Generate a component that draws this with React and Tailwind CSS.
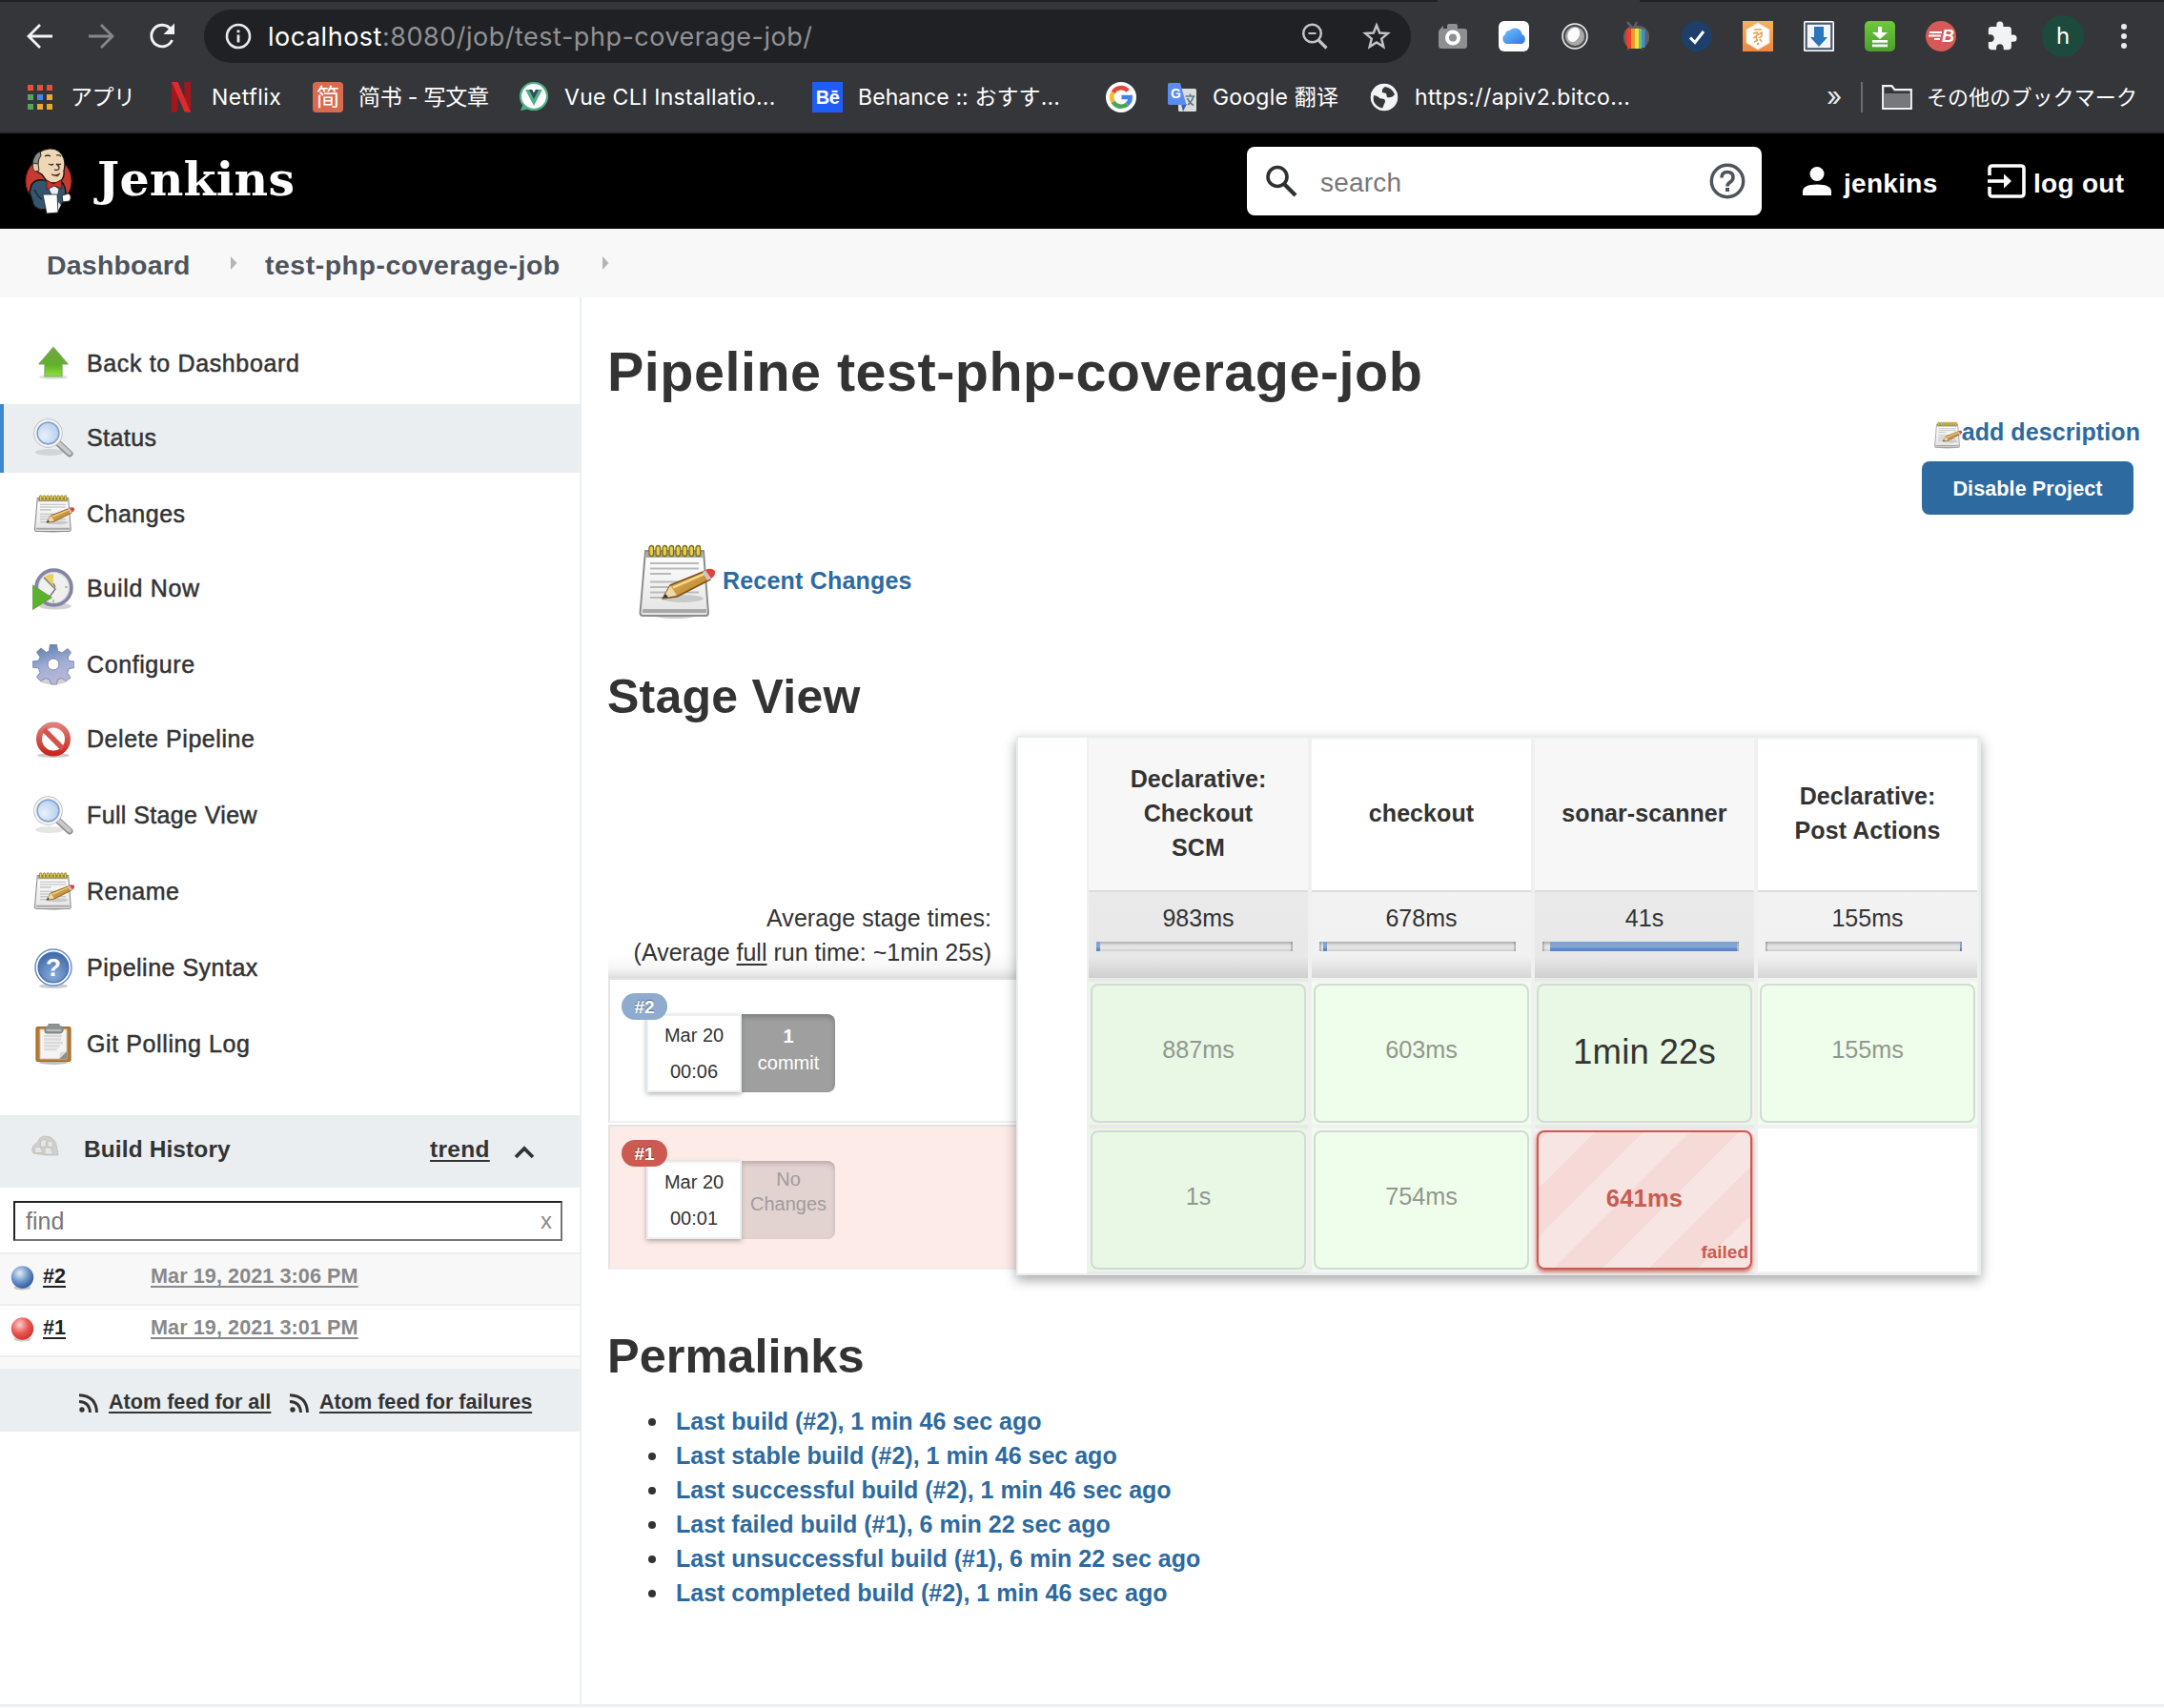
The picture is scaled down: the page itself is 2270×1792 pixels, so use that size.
import React from "react";

/* ---------- browser toolbar icons ---------- */

const Svg = ({ w, h, vb, children, className = "", par }) => (
  <svg width={w} height={h} viewBox={vb || `0 0 ${w} ${h}`} preserveAspectRatio={par} className={"block shrink-0 " + className} fill="none">
    {children}
  </svg>
);

const ArrowLeft = () => (
  <Svg w={28} h={28}>
    <path d="M27 14H3M14 2L2 14l12 12" stroke="#f1f3f4" strokeWidth="2.8" />
  </Svg>
);
const ArrowRight = () => (
  <Svg w={28} h={28}>
    <path d="M1 14h24M14 2l12 12-12 12" stroke="#87888b" strokeWidth="2.8" />
  </Svg>
);
const Reload = () => (
  <Svg w={28} h={28}>
    <path d="M23 6.5A11.3 11.3 0 1 0 24.500 18" stroke="#f1f3f4" strokeWidth="2.9" />
    <path d="M27 0.500v11.5H15.500z" fill="#f1f3f4" />
  </Svg>
);
const InfoCircle = () => (
  <Svg w={28} h={28}>
    <circle cx="14" cy="14" r="12" stroke="#e8eaed" strokeWidth="2.6" />
    <path d="M14 12.5v8M14 7.5v2.8" stroke="#e8eaed" strokeWidth="2.8" />
  </Svg>
);
const ZoomOut = () => (
  <Svg w={28} h={28}>
    <circle cx="11.5" cy="11" r="9.3" stroke="#c3c4c6" strokeWidth="2.5" />
    <path d="M18 18l8.5 8.5" stroke="#c3c4c6" strokeWidth="3.2" />
    <path d="M7.5 11h8" stroke="#c3c4c6" strokeWidth="2" />
  </Svg>
);
const Star = () => (
  <Svg w={30} h={30}>
    <path d="M15 3.5l3.2 8 8.6.6-6.6 5.5 2.1 8.5L15 21.500l-7.3 4.600 2.100-8.500-6.600-5.500 8.600-.6z" stroke="#c3c4c6" strokeWidth="2.4" />
  </Svg>
);

const Camera = () => (
  <Svg w={32} h={32}>
    <path d="M3 8l3-3v3h4V5q0-2 2-2h7q2 0 2 2v3h7q3 0 3 3v15q0 3-3 3H4q-3 0-3-3V11z" fill="#8e8f91" />
    <circle cx="16" cy="17.500" r="6" fill="#8e8f91" stroke="#fff" strokeWidth="4" />
  </Svg>
);
const ICloud = () => (
  <Svg w={32} h={32}>
    <defs>
      <linearGradient id="icl" x1="0" y1="0" x2="1" y2="1">
        <stop offset="0" stopColor="#6fc4f8" />
        <stop offset="1" stopColor="#2f74ea" />
      </linearGradient>
    </defs>
    <rect width="32" height="32" rx="6" fill="#fff" />
    <path d="M8.500 24a5.500 5.500 0 0 1-1.500-10 4.500 4.500 0 0 1 4.500-4 7.500 7.500 0 0 1 13 4 5.300 5.300 0 0 1 -.5 10z" fill="url(#icl)" />
  </Svg>
);
const Orb = () => (
  <Svg w={32} h={32}>
    <circle cx="16" cy="16" r="13" fill="#4e4e50" stroke="#f2f2f2" strokeWidth="1.500" />
    <circle cx="16" cy="16" r="10" fill="#a9a9a9" />
    <ellipse cx="14.500" cy="14.500" rx="6" ry="8" transform="rotate(25 15 15)" fill="#fbfbfb" />
  </Svg>
);
const Tv = () => (
  <Svg w={32} h={32}>
    <path d="M7 1l5 6M17 1l-3 6" stroke="#666" strokeWidth="2" />
    <rect x="3" y="5" width="27" height="24" rx="11" fill="#5d5f62" />
    <path d="M5 12q0-3 3-4v19q-3-1-3-4z" fill="#e33b2c" />
    <rect x="7" y="8" width="4" height="21" fill="#e8442f" />
    <rect x="11" y="8" width="4" height="21" fill="#f09a2c" />
    <rect x="15" y="8" width="4" height="21" fill="#f3e04a" />
    <rect x="19" y="8" width="3" height="21" fill="#6ec16a" />
    <rect x="22" y="9" width="3.500" height="19" fill="#3f8fd0" />
    <path d="M8 29v2M23 29v2" stroke="#444" strokeWidth="3" />
  </Svg>
);
const CheckDisc = () => (
  <Svg w={32} h={32}>
    <circle cx="16" cy="16" r="16" fill="#1f3f6b" />
    <path d="M9 17.500l5 5L23 11" stroke="#fff" strokeWidth="3" />
  </Svg>
);
const OrangeHex = () => (
  <Svg w={32} h={32}>
    <defs>
      <linearGradient id="ohx" x1="0" y1="0" x2="0" y2="1">
        <stop offset="0" stopColor="#f4b35e" />
        <stop offset="1" stopColor="#ee8743" />
      </linearGradient>
    </defs>
    <rect width="32" height="32" fill="url(#ohx)" />
    <path d="M16 2l12 7v14l-12 7-12-7V9z" fill="#fff" stroke="#fbd9b5" />
    <path d="M12 9h8M11 13l4-1v3l5-3v4l-3 2M11 18l3-2 1 4M12 22l4-2M18 19l2 3" stroke="#ef9a4c" strokeWidth="1.500" />
    <circle cx="16" cy="24" r="1.200" fill="#ef9a4c" />
  </Svg>
);
const BlueDown = () => (
  <Svg w={32} h={32}>
    <rect width="32" height="32" rx="1.500" fill="#fff" />
    <rect x="2.700" y="2.700" width="26.600" height="26.600" fill="#f3f5f7" stroke="#46586b" strokeWidth="2.200" />
    <path d="M11 6h10v11h4l-9 10-9-10h4z" fill="#2b75bb" />
  </Svg>
);
const GreenDown = () => (
  <Svg w={32} h={32}>
    <defs>
      <linearGradient id="grd" x1="0" y1="0" x2="0" y2="1">
        <stop offset="0" stopColor="#6ccb3c" />
        <stop offset="1" stopColor="#4f9d2e" />
      </linearGradient>
    </defs>
    <rect width="32" height="32" rx="5" fill="url(#grd)" />
    <path d="M14 6h4v6h6l-8 7-8-7h6zM8 20h16v2.800H8zM8 24.500h16v2.800H8z" fill="#fff" />
  </Svg>
);
const RedB = () => (
  <div className="relative flex size-8 items-center rounded-full bg-[#d65a57]">
    <Svg w={32} h={32}>
      <path d="M4 12h13M3 15.500h13M9 19h6" stroke="#fff" strokeWidth="1.800" />
    </Svg>
    <span className="absolute left-[17px] top-[6px] font-['Liberation_Sans'] text-[18px] font-bold italic leading-5 text-white">B</span>
  </div>
);
const Puzzle = () => (
  <Svg w={34} h={34} vb="0 0 24 24">
    <path
      fill="#f1f3f4"
      d="M20.500 11H19V7c0-1.100-.9-2-2-2h-4V3.500a2.500 2.500 0 0 0-5 0V5H4c-1.100 0-1.990.9-1.990 2v3.800H3.500c1.490 0 2.700 1.210 2.700 2.700s-1.210 2.700-2.700 2.700H2V20c0 1.100.9 2 2 2h3.800v-1.500c0-1.490 1.210-2.700 2.700-2.700 1.490 0 2.700 1.210 2.700 2.700V22H17c1.100 0 2-.9 2-2v-4h1.500a2.500 2.500 0 0 0 0-5z"
    />
  </Svg>
);
const Dots = () => (
  <Svg w={32} h={32}>
    <circle cx="16" cy="6" r="3" fill="#e8eaed" />
    <circle cx="16" cy="16" r="3" fill="#e8eaed" />
    <circle cx="16" cy="26" r="3" fill="#e8eaed" />
  </Svg>
);

/* ---------- bookmark icons ---------- */

const AppsGrid = () => {
  const c = ["#e94e3d", "#e94e3d", "#e94e3d", "#57a55c", "#4285f4", "#eaa92f", "#57a55c", "#eaa92f", "#eaa92f"];
  return (
    <div className="grid w-[26px] grid-cols-3 gap-[4px]">
      {c.map((k, i) => (
        <span key={i} className="h-[6px] w-[6px]" style={{ background: k }} />
      ))}
    </div>
  );
};
const NetflixN = () => (
  <Svg w={20} h={32}>
    <path d="M0 0h6.500v31.300L0 32z" fill="#a3161b" />
    <path d="M13.500 0H20v32l-6.500-.7z" fill="#a3161b" />
    <path d="M0 0h6.500L20 32l-6.500-.7z" fill="#dd2a2c" />
  </Svg>
);
const Jian = () => (
  <div className="flex size-8 items-center justify-center rounded-[4px] bg-[#d9694f] font-['Noto_Sans_CJK_SC',sans-serif] text-[25px] leading-none text-white">
    <span className="-mt-[3px]">简</span>
  </div>
);
const VueCli = () => (
  <Svg w={32} h={32}>
    <circle cx="16" cy="15" r="14" fill="#fff" stroke="#4fb087" strokeWidth="2.200" />
    <path d="M5 23l-3 7 10-2z" fill="#4fb087" />
    <path d="M7 8h5l4 8 4-8h5l-9 17z" fill="#4fb087" />
    <path d="M11 8h3.200l1.800 3.500L17.800 8H21l-5 10z" fill="#34495e" />
  </Svg>
);
const Behance = () => (
  <div className="flex size-8 items-center justify-center bg-[#1f5df6] font-['Liberation_Sans'] text-[20px] font-bold leading-none tracking-[-0.500px] text-white">Bē</div>
);
const GoogleG = () => (
  <Svg w={32} h={32}>
    <circle cx="16" cy="16" r="16" fill="#fff" />
    <g strokeWidth="4.600">
      <path d="M23.200 9.300A9.800 9.800 0 0 0 7.600 11" stroke="#e04a3c" />
      <path d="M7.700 10.900a9.800 9.800 0 0 0 0 10.200" stroke="#f5bb2c" />
      <path d="M7.600 21a9.800 9.800 0 0 0 14.800 2.400" stroke="#4aa655" />
      <path d="M22.300 23.500A9.800 9.800 0 0 0 25.700 16H16.500" stroke="#4483ef" />
    </g>
  </Svg>
);
const Translate = () => (
  <div className="relative size-8">
    <Svg w={32} h={32}>
      <rect x="12" y="7" width="19" height="24" rx="1.500" fill="#dcdcdc" />
      <path d="M15 23h6l-4 8z" fill="#3a5bb5" />
      <path d="M2.500 1H14l6.500 23H2.500Q1 24 1 22.500v-20Q1 1 2.500 1z" fill="#5a8df0" />
      <path d="M19.500 15h10M24.500 12.500V15M28 15q-2 6-6 9M21.500 17q2 5 6.500 7.500" stroke="#5d7d8d" strokeWidth="1.700" />
    </Svg>
    <span className="absolute left-[4px] top-[4px] font-['Liberation_Sans'] text-[14px] font-bold leading-4 text-white">G</span>
  </div>
);
const Globe = () => (
  <Svg w={32} h={32}>
    <circle cx="16" cy="16" r="14" fill="#f1f3f4" />
    <path d="M5 14q5 1 6 3l5 1q2 2 0 5l-2 5q-6-1-9-7-1-3 0-7z" fill="#35363a" />
    <path d="M17 5q7 1 10 8-3 4-8 3l-1-4-4-1q-1-4 3-6z" fill="#35363a" />
    <circle cx="16" cy="16" r="13" stroke="#f1f3f4" strokeWidth="2.500" />
  </Svg>
);
const FolderIcon = () => (
  <Svg w={32} h={26}>
    <path d="M1.200 24.800V1.200h9.300l3 4h17.300v19.600z" fill="#35363a" stroke="#f1f3f4" strokeWidth="2.200" />
    <path d="M2.500 9h27v14.500h-27z" fill="#77787b" />
  </Svg>
);

/* ---------- Jenkins header icons ---------- */

const JenkinsHead = () => (
  <Svg w={50} h={70}>
    <ellipse cx="25" cy="36" rx="24" ry="25" fill="#c9392f" stroke="#7c1f1a" />
    <path d="M7 40q4-6 12-5l18 1q5 2 6 12l-2 10-8 7-16 1q-9-2-9-9l-3-9z" fill="#33556e" stroke="#111" strokeWidth="1.500" />
    <path d="M10 45q4 8 8 10" stroke="#152a3a" strokeWidth="1.500" />
    <path d="M10 16Q13 3 25 2q12-1 16 10 2 6 0 13 1 8-4 11-6 4-14 0l-5-7-5-3q-4-4-3-10z" fill="#eed6b7" stroke="#111" strokeWidth="1.300" />
    <path d="M8 17q2-10 8-12l1 4q-3 4-3 9l-3 5z" fill="#8b8b8b" stroke="#222" />
    <path d="M9 17q-2 6 2 9l4-1-1-7z" fill="#e5c5a2" stroke="#333" />
    <path d="M21 10q3-2 6 0M33 9q3-1 5 1M25 18q3 2 5 0M33 18q3 1 5 0M33 18q5 4 2 6-2 1-4 0M28 29q5 2 9-1" stroke="#3a2c22" strokeWidth="1.300" />
    <path d="M28 28q4 4 9 0l-2 3q-4 1-7-3z" fill="#8d2c22" />
    <path d="M23 35l7 4 8-4 1 9-8-3-8 4z" fill="#c8352c" stroke="#701812" />
    <path d="M25 44l6-3 5 3-2 10-4 1z" fill="#e9eef3" stroke="#223" strokeWidth=".8" />
    <path d="M19 50h15l1 19-12 1z" fill="#fff" stroke="#222" strokeWidth=".8" />
    <path d="M39 51l7-2q4 3 1 8l-7 1z" fill="#fff" stroke="#222" />
    <path d="M35 58l3 3-3 6z" fill="#e8e8e8" />
  </Svg>
);
const SearchGlass = () => (
  <Svg w={34} h={34}>
    <circle cx="13" cy="12.500" r="10" stroke="#2f3032" strokeWidth="3.600" />
    <path d="M20.500 20.500l11.500 11.500" stroke="#2f3032" strokeWidth="4.300" />
  </Svg>
);
const HelpCircle = () => (
  <Svg w={38} h={38}>
    <circle cx="19" cy="19" r="16.700" stroke="#4d545d" strokeWidth="3.400" />
    <path d="M13 15.500q0-6 6-6t6 5.500q0 3-3 5t-3 4.500" stroke="#4d545d" strokeWidth="3.600" />
    <path d="M19 26v4" stroke="#4d545d" strokeWidth="4" />
  </Svg>
);
const UserIcon = () => (
  <Svg w={30} h={30}>
    <circle cx="15" cy="7.500" r="7.500" fill="#fff" />
    <path d="M0 30v-4q0-7.500 15-7.500T30 26v4z" fill="#fff" />
  </Svg>
);
const LogoutIcon = () => (
  <Svg w={40} h={36}>
    <path d="M2 12V5q0-3 3-3h30q3 0 3 3v26q0 3-3 3H5q-3 0-3-3v-7" stroke="#fff" strokeWidth="3.600" />
    <path d="M0 18h19" stroke="#fff" strokeWidth="3.600" />
    <path d="M17 10.500l8 7.500-8 7.500z" fill="#fff" />
  </Svg>
);
const Crumb = () => (
  <Svg w={7} h={14}>
    <path d="M0 0l6.500 7L0 14z" fill="#b5b5b5" />
  </Svg>
);

/* ---------- side panel icons, 44px ---------- */

const UpArrow = () => (
  <Svg w={44} h={44}>
    <defs>
      <linearGradient id="upg" x1="0" y1="0" x2="0" y2="1">
        <stop offset="0" stopColor="#6fa63e" />
        <stop offset=".6" stopColor="#62b02a" />
        <stop offset="1" stopColor="#8fe23c" />
      </linearGradient>
    </defs>
    <ellipse cx="22" cy="35.500" rx="15" ry="2.500" fill="#000" opacity=".12" />
    <path d="M22 4.500l15 17.500h-6v13H13V22H7z" fill="url(#upg)" stroke="#79a85a" strokeWidth="1.200" strokeLinejoin="round" />
  </Svg>
);
const Magnifier = () => (
  <Svg w={44} h={44}>
    <defs>
      <radialGradient id="mgl" cx=".35" cy=".6" r=".8">
        <stop offset="0" stopColor="#e9f1fa" />
        <stop offset="1" stopColor="#a3c2ea" />
      </radialGradient>
    </defs>
    <ellipse cx="18" cy="36.500" rx="15" ry="3.500" fill="#000" opacity=".1" />
    <path d="M26 26l13 12" stroke="#909090" strokeWidth="7" strokeLinecap="round" />
    <path d="M27 26.500l12 11" stroke="#c9c9c9" strokeWidth="4.200" strokeLinecap="round" />
    <circle cx="16.500" cy="16.500" r="13" fill="url(#mgl)" stroke="#b9b9b9" strokeWidth="4.500" />
    <circle cx="16.500" cy="16.500" r="13.300" stroke="#f3f3f3" strokeWidth="2.400" />
    <circle cx="16.500" cy="16.500" r="11.300" stroke="#7fa3d3" strokeWidth="1.400" />
  </Svg>
);
const NotepadArt = () => (
  <>
    <defs>
      <linearGradient id="npg" x1="0" y1="0" x2="0" y2="1">
        <stop offset="0" stopColor="#ffffff" />
        <stop offset="1" stopColor="#e4e4e4" />
      </linearGradient>
      <linearGradient id="npc" x1="0" y1="0" x2="1" y2="1">
        <stop offset="0" stopColor="#f2c66a" />
        <stop offset="1" stopColor="#a9701c" />
      </linearGradient>
    </defs>
    <ellipse cx="38" cy="75" rx="24" ry="4" fill="#000" opacity=".2" />
    <path d="M7 8h61l5 65q0 3-3 3H4.500q-3 0-3-3z" fill="url(#npg)" stroke="#8d8d8d" strokeWidth="2" />
    <path d="M8 9h59l.7 6H7.500z" fill="#a9a9a4" />
    <path d="M4 69h67v4H4z" fill="#a8a8a8" />
    {[11, 18, 25, 32, 39, 46, 53, 60].map((x) => (
      <rect key={x} x={x} y="2.500" width="4.600" height="11" rx="2.300" fill="#e5cf4e" stroke="#7d6a10" strokeWidth="1.300" />
    ))}
    <path d="M12 21h51M12 26.500h51M12 32h22M12 40.500h51M12 46h44M12 51.500h51M12 57h22" stroke="#b9b9b9" strokeWidth="2" />
    <ellipse cx="46" cy="58" rx="22" ry="4" fill="#000" opacity=".14" />
  </>
);
const PencilArt = () => (
  <>
    <path d="M25 58l8-14 37-15 5 9-35 18z" fill="url(#npc)" stroke="#7a5116" strokeWidth="1.500" strokeLinejoin="round" />
    <path d="M25 58l8-13.500 7 10z" fill="#efd9ab" />
    <path d="M25 58l3-5 3 3.500z" fill="#333" />
    <path d="M36 46.500l34-15" stroke="#f8dc94" strokeWidth="2" />
    <path d="M67 30l4-2 5 9-4 2z" fill="#c9c9c9" />
    <path d="M70 28q6-3 10 1 1 5-4 8z" fill="#e0433c" />
  </>
);
const Notepad = ({ size = 44 }) => (
  <Svg w={size} h={size} vb="0 0 80 80">
    <NotepadArt />
    <PencilArt />
  </Svg>
);
const NotepadTask = () => (
  <Svg w={44} h={44} vb="-3 -1 83 86" par="none">
    <NotepadArt />
    <PencilArt />
  </Svg>
);
const ClockPlay = () => (
  <Svg w={44} h={44}>
    <ellipse cx="24" cy="40" rx="17" ry="3.500" fill="#000" opacity=".18" />
    <circle cx="22.500" cy="20.500" r="18.300" fill="#f0f0ee" stroke="#8584a4" strokeWidth="4" />
    <circle cx="22.500" cy="20.500" r="16" stroke="#d5d5df" strokeWidth="1.200" />
    <path d="M22 19L12 10q4-4 10-4z" fill="#e9cf6a" />
    <path d="M12 10l12 12-6 8M24 20l-2-4" stroke="#777" strokeWidth="1.400" />
    <path d="M34 20h3M22 33v3" stroke="#aaa" strokeWidth="1.500" />
    <path d="M0 18l20 13L0 43.500z" fill="#5cb32b" stroke="#6c9c50" strokeWidth="1.200" />
  </Svg>
);
const Gear = () => (
  <Svg w={44} h={44}>
    <defs>
      <linearGradient id="grg" x1="14" y1="0" x2="26" y2="43" gradientUnits="userSpaceOnUse">
        <stop offset="0" stopColor="#5c7fb0" />
        <stop offset=".5" stopColor="#a0aed3" />
        <stop offset="1" stopColor="#c0b8dc" />
      </linearGradient>
    </defs>
    <ellipse cx="22" cy="38.500" rx="14" ry="3.500" fill="#000" opacity=".18" />
    <path
      d="M18.500 0h7l1 7 4.500 2 6-4.500 3.500 4-3.500 5.500 1.500 3.500 5.500.5v6.500l-5.500 1-2 4.500 3.500 5-4.500 3.500-5-3-4 1.500-1 5h-6l-1.500-5-4-1.500-5.500 3-4-4 3.500-5-1.500-4.500L0 24v-6l6.500-1 1.500-3.500L4.500 8 9 4l5.500 4.500 3-1.500z"
      fill="url(#grg)"
      stroke="#8188aa"
      strokeWidth="1"
      strokeLinejoin="round"
    />
    <circle cx="22" cy="21" r="6" fill="#fff" stroke="#8188aa" />
  </Svg>
);
const NoEntry = () => (
  <Svg w={44} h={44}>
    <defs>
      <linearGradient id="neg" x1="0" y1="0" x2="0" y2="1">
        <stop offset="0" stopColor="#df7f79" />
        <stop offset="1" stopColor="#c9271e" />
      </linearGradient>
    </defs>
    <ellipse cx="22" cy="38.500" rx="17" ry="2.500" fill="#000" opacity=".2" />
    <circle cx="22" cy="21.500" r="15" fill="#fff" stroke="url(#neg)" strokeWidth="6" />
    <path d="M12 11.500l20 20" stroke="#d4534c" strokeWidth="5.500" />
  </Svg>
);
const HelpBall = () => (
  <div className="relative size-[44px]">
    <Svg w={44} h={44}>
      <defs>
        <radialGradient id="hbg" cx=".5" cy=".75" r=".75">
          <stop offset="0" stopColor="#88acd9" />
          <stop offset="1" stopColor="#3f67a6" />
        </radialGradient>
      </defs>
      <ellipse cx="22" cy="40.500" rx="15" ry="2.500" fill="#000" opacity=".2" />
      <circle cx="22" cy="21" r="19" fill="#fff" stroke="#6b8fc4" strokeWidth="1.500" />
      <circle cx="22" cy="21" r="15.800" fill="url(#hbg)" stroke="#4a73b2" strokeWidth="1.500" />
    </Svg>
    <span className="absolute inset-x-0 top-[7px] text-center text-[26px] font-bold leading-7 text-white">?</span>
  </div>
);
const Clipboard = () => (
  <Svg w={44} h={44}>
    <ellipse cx="22" cy="40.500" rx="15" ry="2.500" fill="#000" opacity=".25" />
    <rect x="4" y="3.500" width="36" height="36" rx="1.500" fill="#b9792f" stroke="#9c6a2c" strokeWidth="1.200" />
    <path d="M8 6h28v31H8z" fill="#f4f4f4" stroke="#c9c2b5" />
    <path d="M12 13h19M12 16.500h18M12 20h20M12 23.500h17M12 27h14" stroke="#dadada" strokeWidth="2.600" />
    <path d="M36 29v8h-8z" fill="#8e8e8e" />
    <path d="M28 37l1-7 7-1z" fill="#d9d9d9" />
    <path d="M17 0h11v3h3q1 0 1 3v2q-1 2-3 2H15q-2 0-2-2V5q0-2 2-2h2z" fill="#8f9490" stroke="#7d817e" />
    <path d="M15 7h15" stroke="#b9bdb9" strokeWidth="2" />
  </Svg>
);
const BuildRocks = () => (
  <Svg w={29} h={26}>
    <path d="M7 9q1-5 6-6l7 1q5 3 6 8l2 11H16L2 21q-3-3 0-8z" fill="#cfcfcc" stroke="#c4c4c0" />
    <path d="M10 8q3-3 6 0l-1 6H9zM17 8q4-1 6 3l-2 4-4-1zM3 15l6-1 3 6-8 1zM14 15h6l3 7h-9z" fill="#e6e6e4" stroke="#bdbdba" strokeWidth=".8" />
  </Svg>
);
const Rss = () => (
  <Svg w={20} h={20}>
    <circle cx="3" cy="17" r="2.700" fill="#333" />
    <path d="M0 8.500q11 .5 11.500 11.500M0 1.700Q18 2.500 18.500 20" stroke="#333" strokeWidth="2.900" />
  </Svg>
);
const Ball = ({ red }) => (
  <Svg w={26} h={27}>
    <defs>
      <radialGradient id={red ? "balr" : "balb"} cx=".38" cy=".32" r=".7">
        <stop offset="0" stopColor={red ? "#fbd0cd" : "#e4edf2"} />
        <stop offset=".55" stopColor={red ? "#ea5a55" : "#6d97cc"} />
        <stop offset="1" stopColor={red ? "#d42f2a" : "#31599b"} />
      </radialGradient>
    </defs>
    <ellipse cx="12.500" cy="24" rx="9" ry="2.500" fill="#000" opacity=".2" />
    <circle cx="12.500" cy="13" r="11.700" fill={red ? "url(#balr)" : "url(#balb)"} />
  </Svg>
);

/* ---------- sections ---------- */

function BrowserBar() {
  const ext = [Camera, ICloud, Orb, Tv, CheckDisc, OrangeHex, BlueDown, GreenDown, RedB, Puzzle];
  const marks = [
    ["w-[148px]", AppsGrid, "アプリ", "-tracking-[0.500px]"],
    ["w-[154px]", NetflixN, "Netflix", "tracking-[0.500px]"],
    ["w-[216px]", Jian, "简书 - 写文章", "-tracking-[0.200px]"],
    ["w-[308px]", VueCli, "Vue CLI Installatio...", "tracking-[0.300px]"],
    ["w-[308px]", Behance, "Behance :: おすす...", "tracking-[0.100px]"],
    ["w-[64px]", GoogleG, "", ""],
    ["w-[212px]", Translate, "Google 翻译", "tracking-[0.200px]"],
    ["w-[300px]", Globe, "https://apiv2.bitco...", "tracking-[0.400px]"],
  ];
  return (
    <div className="h-[140px] border-b-2 border-[#28292c] bg-[#35363a] font-['Inter','Noto_Sans_CJK_JP',sans-serif] text-white">
      <div className="flex h-[2px]">
        <div className="w-[1508px] bg-[#202124]" />
        <div className="w-[212px]" />
        <div className="flex-1 bg-[#202124]" />
      </div>
      <div className="flex h-[72px] items-center pl-[28px]">
        <div className="w-[64px]"><ArrowLeft /></div>
        <div className="w-[64px]"><ArrowRight /></div>
        <div className="w-[58px]"><Reload /></div>
        <div className="flex h-[56px] w-[1266px] items-center rounded-full bg-[#202124] pl-[22px]">
          <InfoCircle />
          <div className="ml-[17px] mt-px flex-1 whitespace-nowrap text-[27px] leading-9 tracking-[0.510px] text-[#919295]">
            <span className="text-white">localhost</span>:8080/job/test-php-coverage-job/
          </div>
          <div className="w-[64px]"><ZoomOut /></div>
          <div className="w-[51px]"><Star /></div>
        </div>
        <div className="ml-[12px] flex">
          {ext.map((E, i) => (
            <div key={i} className="flex w-[64px] items-center justify-center"><E /></div>
          ))}
          <div className="flex w-[64px] justify-center">
            <div className="flex size-[44px] items-center justify-center rounded-full bg-[#1c4b3d] text-[24px]">h</div>
          </div>
          <div className="flex w-[64px] items-center justify-center"><Dots /></div>
        </div>
      </div>
      <div className="flex h-[56px] items-center whitespace-nowrap pl-[26px] text-[23px] leading-8">
        {marks.map(([w, I, label, tr], i) => (
          <div key={i} className={"flex shrink-0 items-center gap-4 " + w}>
            <div className="flex w-8 shrink-0 justify-center"><I /></div>
            <span className={tr}>{label}</span>
          </div>
        ))}
        <div className="-mt-[3px] ml-[180px] w-[36px] text-[28px] text-[#e8eaed]">»</div>
        <div className="h-8 w-[2px] bg-[#6b6c6f]" />
        <div className="ml-[20px]"><FolderIcon /></div>
        <span className="ml-[15px] text-[22px] tracking-[0.100px]">その他のブックマーク</span>
      </div>
    </div>
  );
}

function JenkinsBar() {
  return (
    <div className="flex h-[100px] items-center bg-black pl-[26px] text-[28px] text-white">
      <div className="-mt-[2px]"><JenkinsHead /></div>
      <div className="-mt-[5px] ml-[26px] font-['DejaVu_Serif',serif] text-[49px] font-bold leading-[60px] tracking-[0.200px]">Jenkins</div>
      <div className="ml-auto flex h-[72px] w-[540px] items-center rounded-lg bg-white pl-[19px] pr-[17px]">
        <SearchGlass />
        <span className="ml-[24px] mt-[4px] flex-1 tracking-[0.200px] text-[#777]">search</span>
        <HelpCircle />
      </div>
      <div className="flex w-[237px] items-center pl-[43px] font-bold">
        <UserIcon />
        <span className="ml-[13px] mt-[5px] tracking-[0.300px]">jenkins</span>
      </div>
      <div className="flex w-[185px] items-center font-bold">
        <LogoutIcon />
        <span className="ml-[8px] mt-[5px] tracking-[0.300px]">log out</span>
      </div>
    </div>
  );
}

const TASKS = [
  ["h-[78px]", UpArrow, "Back to Dashboard", "tracking-[0.640px]"],
  ["h-[80px]", Magnifier, "Status", "tracking-[0.450px]", true],
  ["h-[78px]", NotepadTask, "Changes", "tracking-[0.500px]"],
  ["h-[80px]", ClockPlay, "Build Now", "tracking-[0.700px]"],
  ["h-[78px]", Gear, "Configure", "tracking-[0.600px]"],
  ["h-[80px]", NoEntry, "Delete Pipeline", "tracking-[0.550px]"],
  ["h-[80px]", Magnifier, "Full Stage View", "tracking-[0.380px]"],
  ["h-[80px]", NotepadTask, "Rename", "tracking-[0.500px]"],
  ["h-[80px]", HelpBall, "Pipeline Syntax", "tracking-[0.500px]"],
  ["h-[80px]", Clipboard, "Git Polling Log", "tracking-[0.600px]"],
];

function SidePanel() {
  return (
    <div className="flex w-[610px] shrink-0 flex-col border-r-2 border-[#eaeff2] pt-[34px]">
      {TASKS.map(([h, I, label, tr, on]) => (
        <div key={label} className={h}>
          <div className={"flex h-[72px] items-center border-l-4 pl-[30px] " + (on ? "border-[#3b87d0] bg-[#eaeef1]" : "border-transparent")}>
            <I />
            <span className={"ml-[13px] pb-[3px] text-[25px] leading-9 [-webkit-text-stroke:0.500px_#333] " + tr}>{label}</span>
          </div>
        </div>
      ))}
      <div className="mt-[30px] flex h-[76px] items-center bg-[#eaeef1] pl-[33px] text-[24.500px] font-bold leading-9">
        <div className="-mt-[12px]"><BuildRocks /></div>
        <span className="-mt-[5px] ml-[26px] w-[363px] tracking-[0.100px]">Build History</span>
        <span className="-mt-[5px] w-[88px] tracking-[0.300px] underline decoration-2 underline-offset-[3px]">trend</span>
        <Svg w={22} h={14} className="mt-[2px]">
          <path d="M2 12l9-9 9 9" stroke="#333" strokeWidth="3.800" />
        </Svg>
      </div>
      <div className="flex h-[68px] items-center pl-[14px] pt-px">
        <div className="flex h-[42px] w-[576px] items-center justify-between border-2 border-b-[#767676] border-l-[#222] border-r-[#767676] border-t-[#222] pl-[11px] pr-[9px] text-[25px] leading-9 text-[#777]">
          <span>find</span>
          <span className="text-[24px] text-[#8a8a8a]">x</span>
        </div>
      </div>
      {[["#2", "Mar 19, 2021 3:06 PM"], ["#1", "Mar 19, 2021 3:01 PM"]].map(([n, d], i) => (
        <div key={n} className={"flex h-[54px] border-t-2 border-[#eaeff2] pl-[11px] text-[21.600px] font-bold leading-8 " + (i ? "bg-white" : "bg-[#f8f8f8]")}>
          <div className="mt-[11px]"><Ball red={i === 1} /></div>
          <span className="ml-[8px] mt-[7px] w-[113px] text-[#222] underline decoration-2 underline-offset-[3px]">{n}</span>
          <span className="mt-[7px] tracking-[0.080px] text-[#888] underline decoration-2 underline-offset-[3px]">{d}</span>
        </div>
      ))}
      <div className="h-[14px] border-t-2 border-[#eaeff2] bg-[#f8f8f8]" />
      <div className="flex h-[66px] items-center bg-[#eaeef1] pl-[83px] text-[21.600px] font-bold leading-8">
        <div className="mt-[6px]"><Rss /></div>
        <span className="ml-[11px] mt-[4px] w-[190px] underline decoration-2 underline-offset-[3px]">Atom feed for all</span>
        <div className="mt-[6px]"><Rss /></div>
        <span className="ml-[11px] mt-[4px] underline decoration-2 underline-offset-[3px]">Atom feed for failures</span>
      </div>
    </div>
  );
}

function RunRow({ n, time, red, children }) {
  return (
    <div className={"relative h-[152px] border-2 border-r-0 border-b-[#efefef] border-l-[#e4e4e4] border-t-[#e2e2e2] pl-[38px] pt-[36px] " + (red ? "bg-[#fdebe8]" : "bg-white")}>
      <div className="flex h-[82px]">
        <div className="w-[100px] border-2 border-[#eaeff2] bg-white pt-[2px] text-center text-[20px] leading-[38px] shadow-[0_2px_5px_rgba(0,0,0,0.300)]">
          <div className="-mt-[1px]">Mar 20</div>
          <div>{time}</div>
        </div>
        {children}
      </div>
      <div className={"absolute left-[12px] top-[14px] flex h-[28px] w-[48px] items-center justify-center rounded-full text-[19px] font-bold leading-7 text-white [text-shadow:0_-1px_1px_rgba(0,0,0,0.400)] " + (red ? "bg-[#cb5a50]" : "bg-[#8fabce]")}>
        <span className="mt-[2px]">{n}</span>
      </div>
    </div>
  );
}

const STAGES = [
  { name: ["Declarative:", "Checkout", "SCM"], avg: "983ms", before: 0, len: 4, runs: ["887ms", "1s"] },
  { name: ["checkout"], avg: "678ms", before: 4, len: 4, runs: ["603ms", "754ms"] },
  { name: ["sonar-scanner"], avg: "41s", before: 8, len: 196, runs: ["1min 22s", "641ms"] },
  { name: ["Declarative:", "Post Actions"], avg: "155ms", before: 204, len: 2, runs: ["155ms", null] },
];

function Cell({ value, odd }) {
  if (!value) return <div className="h-[150px] bg-white" />;
  if (value === "641ms")
    return (
      <div className="h-[150px] bg-[#f3f3f3] p-[2px]">
        <div className="relative flex h-[146px] items-center justify-center rounded-lg border-2 border-[#cb5a50] bg-[repeating-linear-gradient(135deg,#f5dad8_0_6.400px,#f6e5e2_6.400px_41.700px,#f5dad8_41.700px_70.700px)] text-[25.500px] font-bold text-[#cb5a50] shadow-[0_2px_4px_#cb5a50]">
          <span className="-mt-[3px] tracking-[0.200px]">{value}</span>
          <span className="absolute bottom-[4px] right-[2px] text-[19px] leading-6">failed</span>
        </div>
      </div>
    );
  const big = value === "1min 22s";
  return (
    <div className={"h-[150px] p-[2px] " + (odd ? "bg-[#e9f8e4]" : "bg-[#effeea]")}>
      <div className={"flex h-[146px] items-center justify-center rounded-lg border-2 border-[#d3d9d8] " + (big ? "text-[36.500px] text-[#333]" : "text-[25.200px] text-[#8f988f]")}>
        <span className={big ? "-mt-px tracking-[0.250px]" : "-mt-[6px]"}>{value}</span>
      </div>
    </div>
  );
}

function StageView() {
  return (
    <div className="mt-[11px] flex h-[566px]">
      <div className="w-[428px]">
        <div className="flex h-[254px] flex-col items-end justify-end bg-[linear-gradient(to_bottom,#fff_0,#fff_90%,#f6f6f6_96%,#dedede_100%)] pb-[9px] pr-[26px] text-[25px] leading-9">
          <div className="tracking-[0.080px]">Average stage times:</div>
          <div>(Average <span className="underline decoration-2 underline-offset-[3px]">full</span> run time: ~1min 25s)</div>
        </div>
        <RunRow n="#2" time="00:06">
          <div className="w-[98px] rounded-r-lg bg-[#9f9f9f] pt-[9px] text-center text-[20px] leading-[28px] text-white shadow-[inset_0_3px_5px_rgba(0,0,0,0.200)]">
            <div className="font-bold">1</div>
            <div>commit</div>
          </div>
        </RunRow>
        <div className="h-[2px]" />
        <RunRow n="#1" time="00:01" red>
          <div className="w-[98px] rounded-r-lg bg-[#e2d3d1] pt-[6px] text-center text-[20px] leading-[26px] text-[#a19b9a] shadow-[inset_0_3px_5px_rgba(0,0,0,0.180)]">
            <div>No</div>
            <div>Changes</div>
          </div>
        </RunRow>
      </div>
      <div className="relative z-10 flex h-[566px] w-[1012px] border-2 border-[#e8edf0] bg-white pl-[72px] shadow-[0_5px_12px_rgba(0,0,0,0.350)]">
        {STAGES.map((s, i) => {
          const odd = i % 2 === 0;
          return (
            <div key={i} className={"flex-1 border-x-2 border-[#f0f0f0] " + (odd ? "bg-[#e9e9e9]" : "bg-[#f2f2f2]")}>
              <div className={"flex h-[162px] flex-col items-center justify-center border-b-2 border-t-2 border-b-[#dcdcdc] border-t-[#f5f5f5] pb-[4px] text-[25px] font-bold leading-9 " + (odd ? "bg-[#f7f7f7]" : "bg-white")}>
                {s.name.map((l) => <div key={l} className="tracking-[0.080px]">{l}</div>)}
              </div>
              <div className={"h-[90px] pl-[8px] text-[25px] leading-9 " + (odd ? "bg-[linear-gradient(to_bottom,#eaeaea_0,#e8e8e8_75%,#cfcfcf_100%)]" : "bg-[linear-gradient(to_bottom,#f2f2f2_0,#f1f1f1_75%,#d6d6d6_100%)]")}>
                <div className="-ml-[8px] pt-[9px] text-center">{s.avg}</div>
                <div className="mt-[7px] flex h-[10px] w-[206px] bg-[#e4e4e4] shadow-[inset_0_2px_3px_rgba(0,0,0,0.250),inset_0_-2px_0_rgba(0,0,0,0.070),inset_2px_0_0_rgba(0,0,0,0.120),inset_-2px_0_0_rgba(0,0,0,0.120)]">
                  <div className="h-[10px] bg-[linear-gradient(to_bottom,#7a9fd0_0,#86a8d2_55%,#5580ce_80%,#5f8ad0_100%)]" style={{ marginLeft: s.before, width: s.len }} />
                </div>
              </div>
              <div className="flex flex-col gap-[4px] pt-[4px]">
                <Cell value={s.runs[0]} odd={odd} />
                <Cell value={s.runs[1]} odd={odd} />
              </div>
            </div>
          );
        })}
      </div>
    </div>
  );
}

const LINKS = [
  "Last build (#2), 1 min 46 sec ago",
  "Last stable build (#2), 1 min 46 sec ago",
  "Last successful build (#2), 1 min 46 sec ago",
  "Last failed build (#1), 6 min 22 sec ago",
  "Last unsuccessful build (#1), 6 min 22 sec ago",
  "Last completed build (#2), 1 min 46 sec ago",
];

function MainPanel() {
  return (
    <div className="flex-1 pl-[28px] pt-[42px]">
      <h1 className="-ml-px whitespace-nowrap text-[57.500px] font-bold leading-[72px] tracking-[0.500px]">Pipeline test-php-coverage-job</h1>
      <div className="mt-[9px] flex h-[36px] items-center justify-end pr-[25px] text-[25px] font-bold leading-9 text-[#2d6a9f]">
        <div className="mt-[6px]"><Notepad size={29} /></div>
        <span className="tracking-[0.080px]">add description</span>
      </div>
      <div className="mr-[32px] mt-[13px] flex justify-end">
        <div className="flex h-[56px] w-[222px] items-center justify-center rounded-lg bg-[#2d6a9f] pt-[2px] text-[21.600px] font-bold tracking-[0.080px] text-white">Disable Project</div>
      </div>
      <div className="mt-[29px] flex h-[82px] items-center pl-[32px] text-[25px] font-bold text-[#2d6a9f]">
        <div className="-mt-px"><Notepad size={80} /></div>
        <span className="ml-[8px] tracking-[0.200px]">Recent Changes</span>
      </div>
      <h2 className="-ml-px mt-[50px] text-[50px] font-bold leading-[60px] tracking-[0.250px]">Stage View</h2>
      <StageView />
      <h2 className="-ml-px mt-[55px] text-[50.500px] font-bold leading-[60px]">Permalinks</h2>
      <ul className="mt-[20px] pl-[42px] text-[25px] font-bold leading-9 text-[#2d6a9f]">
        {LINKS.map((l) => (
          <li key={l} className="flex items-center">
            <span className="mr-[21px] mt-[2px] size-2 rounded-full bg-[#333]" />
            {l}
          </li>
        ))}
      </ul>
    </div>
  );
}

export default function App() {
  return (
    <div className="flex h-[1792px] w-[2270px] flex-col overflow-hidden bg-white font-['Liberation_Sans',Arial,sans-serif] text-[#333]">
      <BrowserBar />
      <JenkinsBar />
      <div className="flex h-[72px] items-center bg-[#f8f8f8] pl-[49px] text-[28.500px] font-bold leading-9 text-[#4d545d]">
        <span className="mt-[3px] w-[193px] tracking-[0.200px]">Dashboard</span>
        <Crumb />
        <span className="ml-[29px] mt-[3px] w-[354px] tracking-[0.500px]">test-php-coverage-job</span>
        <Crumb />
      </div>
      <div className="flex h-[1476px]">
        <SidePanel />
        <MainPanel />
      </div>
      <div className="h-[4px] border-t-2 border-[#eaeff2] bg-[#f8f8f8]" />
    </div>
  );
}
